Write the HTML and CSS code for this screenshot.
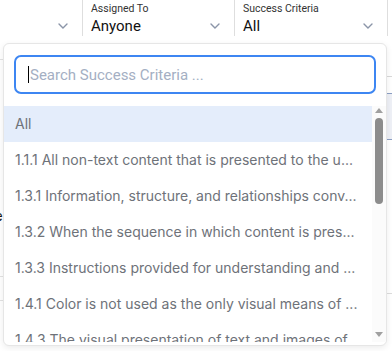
FILE: index.html
```html
<!DOCTYPE html>
<html lang="en">
<head>
  <meta charset="UTF-8">
  <title>Filters</title>
  <link rel="stylesheet" href="styles.css">
</head>
<body>
  <div class="topbar">
    <div class="filter first">
      <div class="filter-text"></div>
      <svg class="chevron" width="10" height="6" viewBox="0 0 10 6"><path d="M1 1l4 4 4-4" fill="none" stroke="#8b95a8" stroke-width="1.4" stroke-linecap="round"/></svg>
    </div>
    <div class="filter">
      <div class="filter-text">
        <span class="filter-label">Assigned To</span>
        <span class="filter-value">Anyone</span>
      </div>
      <svg class="chevron" width="10" height="6" viewBox="0 0 10 6"><path d="M1 1l4 4 4-4" fill="none" stroke="#8b95a8" stroke-width="1.4" stroke-linecap="round"/></svg>
    </div>
    <div class="filter wide">
      <div class="filter-text">
        <span class="filter-label">Success Criteria</span>
        <span class="filter-value">All</span>
      </div>
      <svg class="chevron" width="10" height="6" viewBox="0 0 10 6"><path d="M1 1l4 4 4-4" fill="none" stroke="#8b95a8" stroke-width="1.4" stroke-linecap="round"/></svg>
    </div>
    <div class="filter rest"></div>
  </div>

  <div class="content">
    <div class="table">
      <div class="row head"></div>
      <div class="row tall"><span class="peek">e</span></div>
      <div class="row"></div>
    </div>
    <div class="side">
      <div class="side-gap"></div>
      <div class="side-band"></div>
      <div class="side-low"></div>
    </div>
  </div>

  <div class="dropdown">
    <div class="search-wrap">
      <div class="search"><span class="caret"></span><span class="placeholder">Search Success Criteria ...</span></div>
    </div>
    <div class="list">
      <ul class="options">
        <li class="selected">All</li>
        <li>1.1.1 All non-text content that is presented to the u...</li>
        <li>1.3.1 Information, structure, and relationships conv...</li>
        <li>1.3.2 When the sequence in which content is pres...</li>
        <li>1.3.3 Instructions provided for understanding and ...</li>
        <li>1.4.1 Color is not used as the only visual means of ...</li>
        <li>1.4.3 The visual presentation of text and images of ...</li>
      </ul>
      <div class="scrollbar">
        <span class="arrow up"></span>
        <span class="thumb"></span>
        <span class="arrow down"></span>
      </div>
    </div>
  </div>
</body>
</html>
```

FILE: styles.css
```css
*{
  margin: 0;
  padding: 0;
  box-sizing: border-box;
}
body {
  font-family: "Inter", "Liberation Sans", sans-serif;
  background: #fff;
  width: 392px;
  height: 351px;
  overflow: hidden;
  position: relative;
}
.topbar {
  display: flex;
  height: 36px;
  background: #fff;
}
.filter {
  display: flex;
  justify-content: space-between;
  flex-shrink: 0;
  width: 152px;
  height: 36px;
  padding: 3px 14px 0 8px;
  border-right: 1px solid #dedede;
  font-family: "Roboto", sans-serif;
}
.filter.first {
  width: 83px;
}
.filter.wide {
  width: 153px;
}
.filter.rest {
  flex: 1;
  flex-shrink: 1;
  border-right: none;
}
.filter-text {
  display: flex;
  flex-direction: column;
}
.filter-label {
  font-size: 10.5px;
  color: #333;
  line-height: 12px;
}
.filter-value {
  font-size: 15px;
  color: #111;
  line-height: 18px;
  margin-top: 2px;
}
.chevron {
  display: block;
  margin-top: 19.5px;
}

/* page behind the popup */
.content {
  display: flex;
  height: 315px;
}
.table {
  flex: 1;
}
.row {
  height: 24px;
  border-bottom: 1px solid #e2e2e2;
}
.row.tall {
  height: 217px;
  position: relative;
}
.peek {
  position: absolute;
  left: -5px;
  top: 148px;
  font-size: 13px;
  color: #111;
}
.side {
  width: 5px;
}
.side-gap {
  height: 41px;
  border-bottom: 1px solid #d8d8d8;
}
.side-band {
  height: 47px;
  margin-top: 16px;
  background: #eef0f6;
  border-top: 1px solid #8c9fc4;
  border-bottom: 1px solid #8c9fc4;
}
.side-low {
  height: 154px;
  border-bottom: 1px solid #dcdcdc;
}

/* popup */
.dropdown {
  position: absolute;
  left: 3px;
  top: 43px;
  width: 384px;
  height: 303px;
  background: #fff;
  border: 1px solid #e6e6e6;
  border-radius: 6px;
  box-shadow: 0 2px 6px rgba(0,0,0,0.08);
  overflow: hidden;
  display: flex;
  flex-direction: column;
}
.search-wrap {
  padding: 11px 10px 12px;
}
.search {
  display: flex;
  align-items: center;
  height: 39px;
  border: 2px solid #3d86f2;
  border-radius: 7px;
  padding-left: 12px;
  font-family: "Roboto", sans-serif;
  font-size: 15px;
}
.caret {
  width: 1px;
  height: 17px;
  background: #000;
  margin-right: 1px;
}
.placeholder {
  color: #a4afc3;
}
.list {
  display: flex;
  flex: 1;
  min-height: 0;
  margin-bottom: 3px;
}
.options {
  list-style: none;
  flex: 1;
  overflow: hidden;
}
.options li {
  height: 36px;
  line-height: 36px;
  padding-left: 11px;
  font-size: 14px;
  color: #6e7279;
  white-space: nowrap;
  overflow: hidden;
}
.options li.selected {
  background: #e4edfb;
}
.scrollbar {
  width: 14px;
  background: #fbfbfb;
  display: flex;
  flex-direction: column;
  align-items: center;
  padding: 2px 0 5px;
}
.arrow {
  width: 0;
  height: 0;
  border-left: 4px solid transparent;
  border-right: 4px solid transparent;
}
.arrow.up {
  border-bottom: 5px solid #a0a0a0;
}
.arrow.down {
  border-top: 5px solid #a0a0a0;
  margin-top: auto;
}
.thumb {
  width: 8px;
  height: 86px;
  margin-top: 5px;
  background: #8c8c8c;
  border-radius: 4px;
}
```
